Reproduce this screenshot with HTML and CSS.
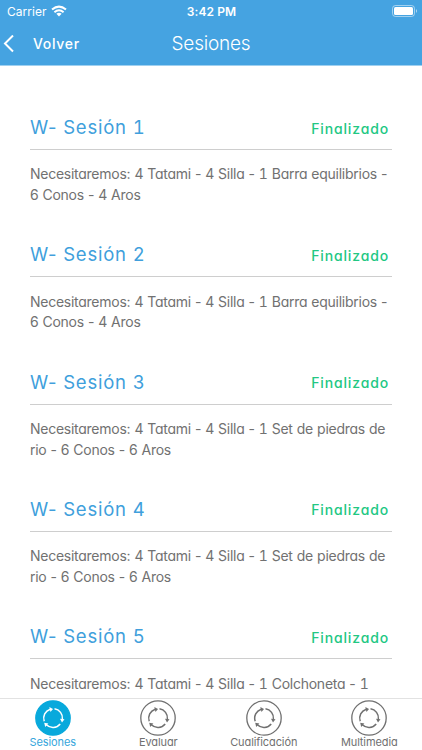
FILE: index.html
```html
<!DOCTYPE html>
<html lang="es">
<head>
<meta charset="utf-8">
<title>Sesiones</title>
<link rel="stylesheet" href="styles.css">
</head>
<body>
<svg width="0" height="0" class="defs">
  <symbol id="cycle" viewBox="0 0 36 36">
    <circle class="disc" cx="18" cy="18" r="17.2"/>
    <g fill="none" stroke-width="1.5" stroke="currentColor">
      <path d="M9.2 21.2A9.4 9.4 0 0 1 15.2 9.2"/>
      <path d="M19.5 8.8A9.4 9.4 0 0 1 27.4 19.2"/>
      <path d="M25.2 24A9.4 9.4 0 0 1 11.3 24.8"/>
    </g>
    <g fill="currentColor">
      <path d="M14.3 6.9L18 8.9L15.5 11.9Z"/>
      <path d="M25 18.8L29.5 19.2L27 22.5Z"/>
      <path d="M9.2 22.8L13.4 23.5L10.2 26.9Z"/>
    </g>
  </symbol>
</svg>
<div class="screen">
  <header>
    <div class="status">
      <div class="carrier"><span>Carrier</span>
        <svg width="16" height="12" viewBox="0 0 16 12" fill="none" stroke="#fff" stroke-width="2">
          <path d="M1 4.6Q8-1.4 15 4.6"/><path d="M3.4 7.2Q8 3.2 12.6 7.2"/><path d="M5.4 8.8Q8 6.8 10.6 8.8L8 11.5Z" fill="#fff" stroke="none"/>
        </svg>
      </div>
      <span class="time">3:42 PM</span>
      <svg class="battery" width="26" height="12" viewBox="0 0 26 12">
        <rect x=".5" y=".5" width="22" height="11" rx="3" fill="none" stroke="#fff" stroke-opacity=".5"/>
        <rect x="2" y="2" width="19" height="8" rx="1.5" fill="#fff"/>
        <path d="M24 4Q26 6 24 8Z" fill="#fff" fill-opacity=".6"/>
      </svg>
    </div>
    <nav class="bar">
      <div class="back"><svg width="12" height="18" viewBox="0 0 12 18" fill="none" stroke="#fff" stroke-width="2"><path d="M11 .5L3 8.5L11 16.5"/></svg><span>Volver</span></div>
      <h1>Sesiones</h1>
    </nav>
  </header>
  <main>
    <section><div class="head"><h2>W- Sesión <span class="num">1</span></h2><span class="state">Finalizado</span></div><p>Necesitaremos: 4 Tatami - 4 Silla - <span class="num">1</span> Barra equilibrios -<br>6 Conos - 4 Aros</p></section>
    <section><div class="head"><h2>W- Sesión <span class="num">2</span></h2><span class="state">Finalizado</span></div><p>Necesitaremos: 4 Tatami - 4 Silla - <span class="num">1</span> Barra equilibrios -<br>6 Conos - 4 Aros</p></section>
    <section><div class="head"><h2>W- Sesión <span class="num">3</span></h2><span class="state">Finalizado</span></div><p>Necesitaremos: 4 Tatami - 4 Silla - <span class="num">1</span> Set de piedras de<br>rio - 6 Conos - 6 Aros</p></section>
    <section><div class="head"><h2>W- Sesión <span class="num">4</span></h2><span class="state">Finalizado</span></div><p>Necesitaremos: 4 Tatami - 4 Silla - <span class="num">1</span> Set de piedras de<br>rio - 6 Conos - 6 Aros</p></section>
    <section><div class="head"><h2>W- Sesión <span class="num">5</span></h2><span class="state">Finalizado</span></div><p>Necesitaremos: 4 Tatami - 4 Silla - <span class="num">1</span> Colchoneta - <span class="num">1</span></p></section>
  </main>
  <footer>
    <div class="tab active"><svg class="icon"><use href="#cycle"/></svg><span>Sesiones</span></div>
    <div class="tab"><svg class="icon"><use href="#cycle"/></svg><span>Evaluar</span></div>
    <div class="tab"><svg class="icon"><use href="#cycle"/></svg><span>Cualificación</span></div>
    <div class="tab"><svg class="icon"><use href="#cycle"/></svg><span>Multimedia</span></div>
  </footer>
</div>
</body>
</html>
```
FILE: styles.css
```css
* { box-sizing: border-box; margin: 0; padding: 0; }
body { font-family: Inter, sans-serif; font-feature-settings: "cv11"; background: #fff; color: #717171; overflow: hidden; }
.defs { position: absolute; }
.num { font-feature-settings: "tnum"; }
.screen { width: 422px; height: 750px; display: flex; flex-direction: column; overflow: hidden; }
header { height: 66px; flex: none; background: #45a3e1; color: #fff; border-bottom: 1px solid #9fd0f0; }
.status { height: 22px; display: grid; grid-template-columns: 1fr auto 1fr; align-items: center; padding: 0 4px 0 7px; font-size: 12px; font-feature-settings: normal; }
.carrier { display: flex; align-items: center; gap: 4px; letter-spacing: .05px; }
.time { font-weight: 600; letter-spacing: .1px; transform: translateX(-1px); }
.battery { justify-self: end; }
.bar { height: 43px; display: grid; grid-template-columns: 1fr auto 1fr; align-items: center; padding-left: 2px; }
.back { display: flex; align-items: center; gap: 19px; font-size: 14px; font-weight: 500; letter-spacing: .7px; }
h1 { font-size: 19px; font-weight: 300; letter-spacing: -.2px; transform: translateX(-1px); }
main { flex: 1; min-height: 0; overflow: hidden; padding: 44px 30px 0; }
section { height: 127.3px; }
.head { height: 40px; display: flex; justify-content: space-between; align-items: center; border-bottom: 1px solid #cecece; padding: 0 3px 5px 0; }
h2 { font-size: 18.5px; font-weight: 400; letter-spacing: .75px; color: #409fdc; }
.state { font-size: 14px; font-weight: 500; letter-spacing: .85px; color: #22c783; padding-top: 2px; }
p { padding-top: 14.4px; font-size: 14px; line-height: 20.6px; letter-spacing: -.26px; word-spacing: .4px; white-space: nowrap; }
footer { height: 52px; flex: none; background: #fff; border-top: 1px solid #e2e2e2; display: grid; grid-template-columns: repeat(4, 1fr); }
.tab { display: flex; flex-direction: column; align-items: center; font-size: 11px; line-height: 13px; letter-spacing: -.1px; color: #707070; }
.icon { width: 36px; height: 36px; margin-top: 1px; flex: none; }
.disc { fill: var(--disc, none); stroke: var(--ring, #707070); stroke-width: 1.3; }
.active { --disc: #08a9dc; --ring: #08a9dc; color: #35a6dc; }
.active .icon { color: #fff; }
```
